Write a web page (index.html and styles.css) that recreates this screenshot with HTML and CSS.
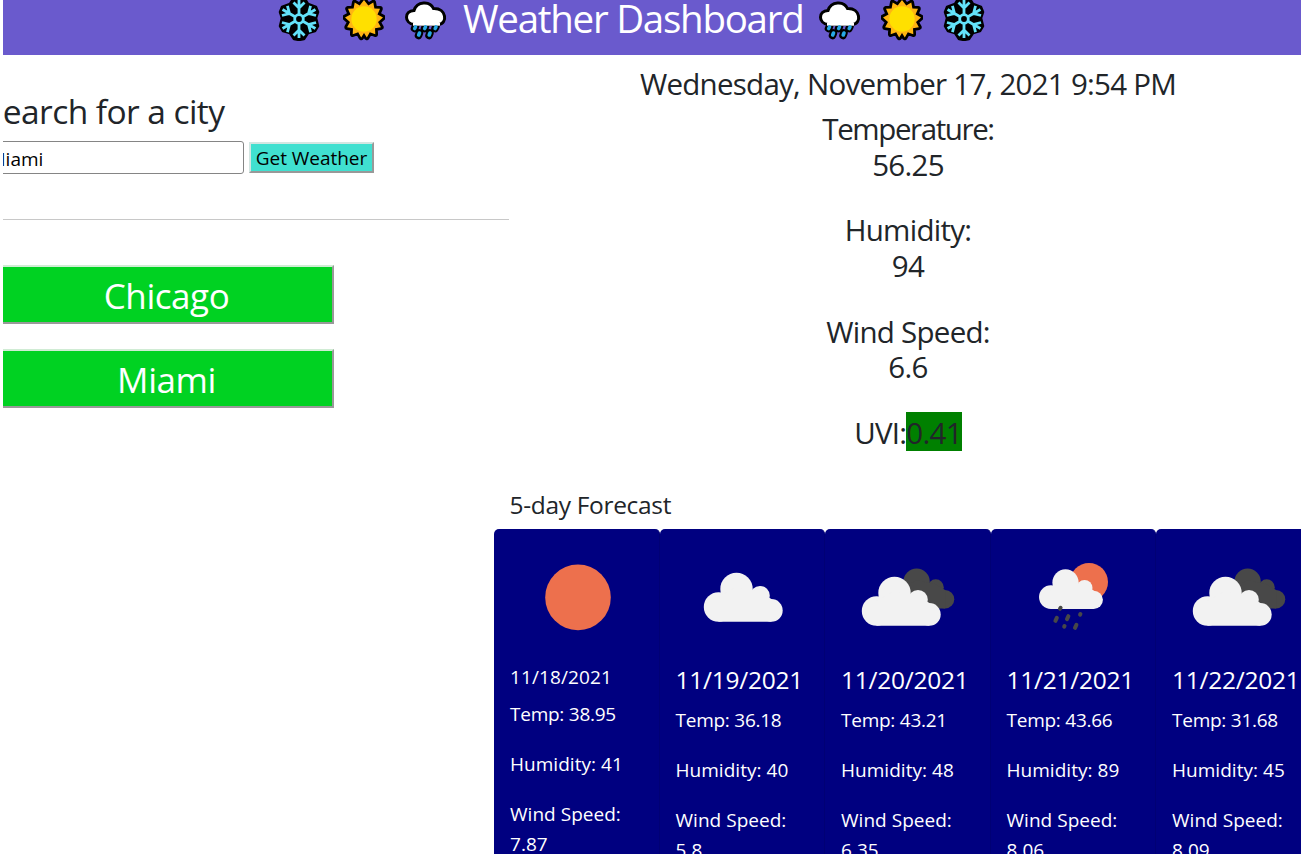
FILE: index.html
```html
<!DOCTYPE html>
<html lang="en">
<head>
<meta charset="utf-8">
<title>Weather Dashboard</title>
<link rel="stylesheet" href="styles.css">
</head>
<body>
<svg class="defs" aria-hidden="true">
  <defs>
    <symbol id="snow" viewBox="-21 -22 42 44">
      <path d="M0-21 6-20 9-15 17-12 19-7 17-1 19 7 16 12 9 14 5 20 0 21-5 20-9 14-16 12-19 7-17-1-19-7-17-12-9-15-6-20Z" fill="#000" stroke="#000" stroke-width="2.500" stroke-linejoin="round"/>
      <g stroke="#63e3fa" stroke-width="2.800" fill="none">
        <path id="arm" d="M0-4V-19M-5.500-16.500 0-11 5.500-16.500"/>
        <use href="#arm" transform="rotate(60)"/><use href="#arm" transform="rotate(120)"/><use href="#arm" transform="rotate(180)"/><use href="#arm" transform="rotate(240)"/><use href="#arm" transform="rotate(300)"/>
        <circle r="4.300"/>
      </g>
    </symbol>
    <symbol id="sun" viewBox="-21 -22 42 44">
      <path d="M0-19 4.300-13.400 9.300-16.500 10.400-10.400 16-10.200 13.500-4.600 19-1.500 14 3 16.900 8.200 11 9.200 11.300 15.200 5.800 13.200 2.800 18.400 0 14-2.800 18.400-5.800 13.200-11.300 15.200-11 9.200-16.900 8.200-14 3-19-1.500-13.500-4.600-16-10.200-10.400-10.400-9.300-16.500-4.300-13.400Z" fill="#ffb512" stroke="#000" stroke-width="5.500" stroke-linejoin="round" paint-order="stroke"/>
      <circle r="12.700" fill="#ffe000"/>
    </symbol>
    <symbol id="rain" viewBox="0 0 42 44">
      <g fill="none" stroke="#000" stroke-width="7.500" stroke-linecap="round"><path d="m10.500 29.500-1 2M20.500 29.500l-1 2M31 29.500l-1 2M14.500 36l-1 2.500M25 36l-1 2.500"/></g>
      <path d="M9 27.500C-1 26-1 14 9 13.500 12 4 25 3.500 28.500 11.500 42 11 42.500 26.500 34 27.500Z" fill="#fff" stroke="#000" stroke-width="3"/>
      <path d="M8 27.200h27" stroke="#fff" stroke-width="3"/>
      <g stroke="#27a9e5" stroke-width="3.600" stroke-linecap="round"><path d="m10.500 30-.8 1.500M20.500 30l-.8 1.500M31 30l-.8 1.500M14.500 36l-.8 2M25 36l-.8 2"/></g>
    </symbol>
    <symbol id="cloud" viewBox="0 0 133 120">
      <circle cx="42.500" cy="70" r="14.700"/><circle cx="60.500" cy="51.900" r="16.200"/><circle cx="84" cy="58.700" r="9.800"/><circle cx="95.400" cy="73.400" r="11.300"/><path d="M42.500 84.700H95.400V62L84 55 60 50 42.500 60Z"/>
    </symbol>
    <symbol id="overcast" viewBox="0 0 133 120">
      <g transform="translate(26.300 2.500) scale(.815)"><use href="#cloud" width="133" height="120" fill="#484848"/></g>
      <use href="#cloud" x="-7" y="4" width="133" height="120" fill="#f2f2f2"/>
    </symbol>
  </defs>
</svg>
<div class="page">
  <header class="header">
    <svg class="emoji"><use href="#snow"/></svg>
    <svg class="emoji gap-wide"><use href="#sun"/></svg>
    <svg class="emoji"><use href="#rain"/></svg>
    <h1 class="title">Weather Dashboard</h1>
    <svg class="emoji"><use href="#rain"/></svg>
    <svg class="emoji"><use href="#sun"/></svg>
    <svg class="emoji"><use href="#snow"/></svg>
  </header>
  <main class="main">
    <aside class="side">
      <h2 class="search-title">Search for a city</h2>
      <form class="search"><input class="field" value="Miami"><button class="go" type="button">Get Weather</button></form>
      <hr class="rule">
      <button class="city">Chicago</button>
      <button class="city">Miami</button>
    </aside>
    <section class="content">
      <div class="now">
        <p class="date">Wednesday, November 17, 2021 9:54 PM</p>
        <p class="stat"><span class="tight">Temperature:</span><br>56.25</p>
        <p class="stat">Humidity:<br>94</p>
        <p class="stat">Wind Speed:<br>6.6</p>
        <p class="stat">UVI:<span class="low">0.41</span></p>
      </div>
      <h3 class="forecast-title">5-day Forecast</h3>
      <div class="cards">
        <article class="card first"><svg class="icon"><circle cx="68" cy="60.400" r="32.800" fill="#ed704d"/></svg><h4 class="day">11/18/2021</h4><p class="temp">Temp: 38.95</p><p>Humidity: 41</p><p>Wind Speed:<br>7.87</p></article>
        <article class="card"><svg class="icon"><use href="#cloud" width="133" height="120" fill="#f2f2f2"/></svg><h4 class="day">11/19/2021</h4><p class="temp">Temp: 36.18</p><p>Humidity: 40</p><p>Wind Speed:<br>5.8</p></article>
        <article class="card"><svg class="icon"><use href="#overcast" width="133" height="120"/></svg><h4 class="day">11/20/2021</h4><p class="temp">Temp: 43.21</p><p>Humidity: 48</p><p>Wind Speed:<br>6.35</p></article>
        <article class="card"><svg class="icon"><circle cx="82" cy="45" r="19" fill="#ed704d"/><g transform="translate(9.500 3.400) scale(.81)"><use href="#cloud" width="133" height="120" fill="#f2f2f2"/></g><path class="drops" d="m53.600 70.800-.6 1M49.800 80.800l-1.400 3M61.400 79.200l-1.400 3M73.400 77l-.3.600M57.500 89l-.3.600M69.400 87.800l-1.400 3"/></svg><h4 class="day">11/21/2021</h4><p class="temp">Temp: 43.66</p><p>Humidity: 89</p><p>Wind Speed:<br>8.06</p></article>
        <article class="card"><svg class="icon"><use href="#overcast" width="133" height="120"/></svg><h4 class="day">11/22/2021</h4><p class="temp">Temp: 31.68</p><p>Humidity: 45</p><p>Wind Speed:<br>8.09</p></article>
      </div>
    </section>
  </main>
</div>
</body>
</html>
```
FILE: styles.css
```css
* { box-sizing: border-box; }
body { margin: 0; background: #fff; overflow: hidden; color: #212529; font-family: "Open Sans", "Noto Sans", sans-serif; }
h1, h2, h3, h4, p { margin: 0; font-weight: 400; }
.defs { position: absolute; width: 0; height: 0; }
.page { width: 1298px; height: 854px; margin-left: 3px; overflow: hidden; background: #fff; }
.header { display: flex; height: 55px; padding-left: 275px; gap: 20px; background: #6a5acd; color: #fff; overflow: hidden; }
.emoji { width: 42px; height: 44px; flex: none; margin-top: -3px; overflow: visible; }
.emoji use { overflow: visible; }
.gap-wide { margin-left: 3px; }
.title { width: 340px; height: 55px; flex: none; margin: 0 -4px; font-size: 38.500px; line-height: 36px; letter-spacing: -1.260px; white-space: nowrap; }
.main { display: flex; height: 799px; }
.side { width: 491px; flex: none; padding-top: 36px; }
.search-title { margin-left: -18px; height: 50px; font-size: 33.500px; line-height: 40px; letter-spacing: -.570px; white-space: nowrap; }
.search { display: flex; gap: 5px; align-items: center; height: 33px; }
.field { width: 261px; height: 33px; margin-left: -20px; padding: 2px 2px 0 4.500px; border: 1px solid #858585; border-radius: 3px; font: 19px "Open Sans", sans-serif; color: #000; }
.go { width: 125px; height: 31px; padding: 1px 0 0; border: 2px solid; border-color: #d3e6e2 #999 #999 #d3e6e2; background: #40e0d0; color: #000; font: 19px "Open Sans", sans-serif; letter-spacing: -.05px; white-space: nowrap; }
.rule { width: 506px; height: 1px; margin: 45px 0; border: 0; background: #c8c8c8; }
.city { display: block; width: 335px; height: 59px; margin: 0 0 25px -4px; padding: 2px 0 0; border: 2px solid; border-color: #d0ecd4 #999 #999 #d0ecd4; background: #00d222; color: #fff; font: 35px "Open Sans", sans-serif; letter-spacing: -.450px; }
.content { width: 828px; flex: none; }
.now { height: 430px; padding-top: 11px; text-align: center; font-size: 29.500px; line-height: 35.700px; letter-spacing: -.730px; }
.date { margin-bottom: 9.300px; }
.stat { margin-bottom: 29.900px; }
.tight { letter-spacing: -1.400px; }
.low { display: inline-block; height: 39px; margin-top: -3px; padding-top: 3px; background: #008000; }
.forecast-title { height: 44px; padding-left: 15.500px; font-size: 24.500px; line-height: 40px; letter-spacing: -.320px; }
.cards { display: flex; }
.card { width: 165.500px; height: 340px; flex: none; padding: 8px 0 0 16px; background: #000080; border: 1px solid #000074; border-width: 0 1px 0 0; border-radius: 5px; color: #fff; font-size: 19px; line-height: 30px; letter-spacing: .03px; white-space: nowrap; }
.card p { margin-bottom: 20px; }
.card .temp { letter-spacing: -.250px; }
.icon { display: block; width: 133px; height: 120px; }
.day { height: 48px; padding-top: 8px; font-size: 24.500px; line-height: 30px; letter-spacing: -.240px; }
.first .day { height: 42px; font-size: 19px; line-height: 24px; letter-spacing: .1px; }
.drops { fill: none; stroke: #484848; stroke-width: 4; stroke-linecap: round; }
```
